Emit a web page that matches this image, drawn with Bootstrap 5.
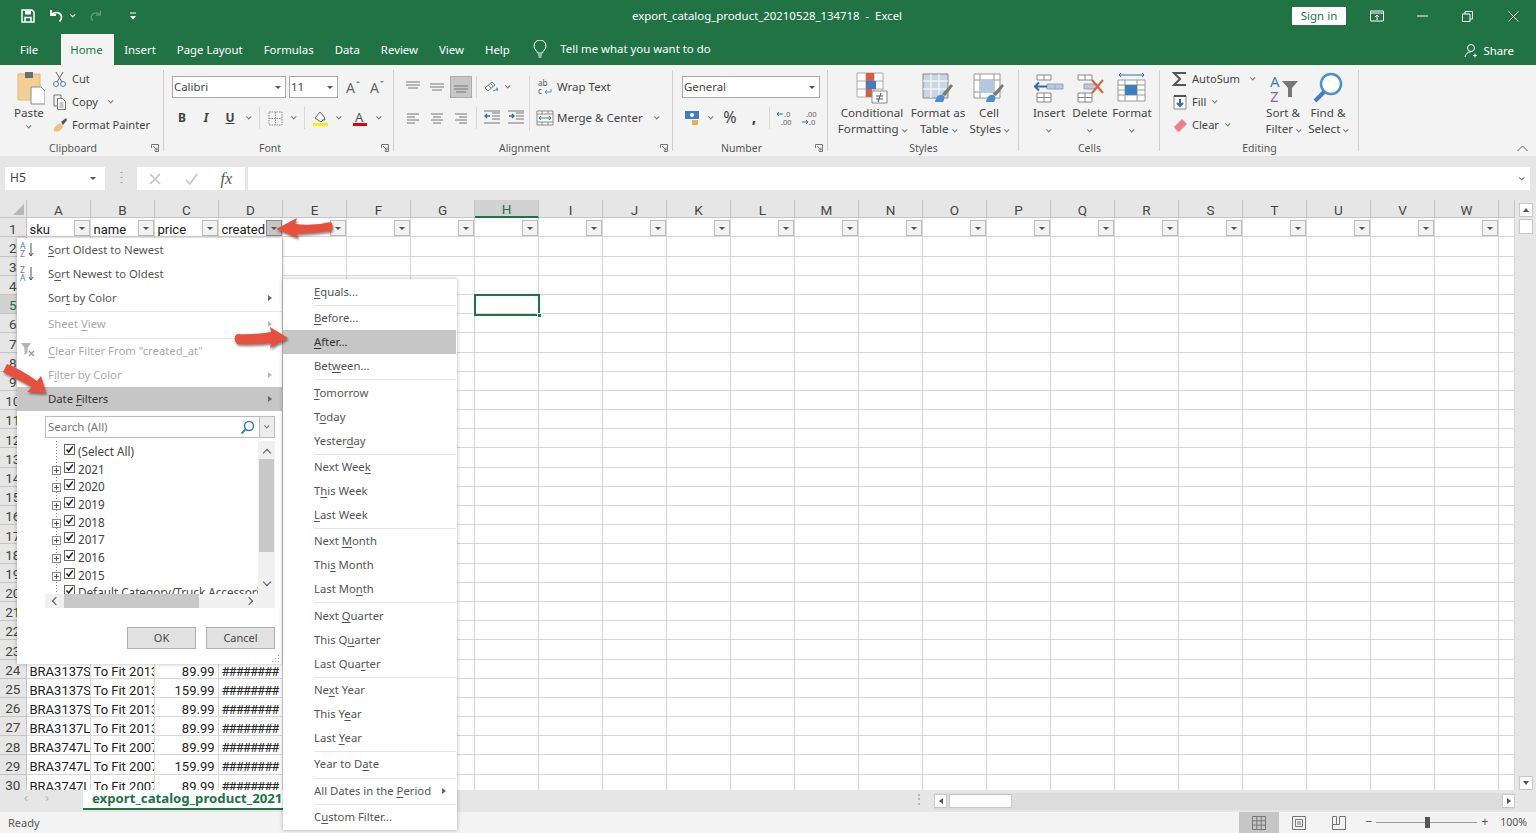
<!DOCTYPE html>
<html lang="en">
<head>
<meta charset="UTF-8">
<title>export_catalog_product_20210528_134718 - Excel</title>
<link href="https://cdn.jsdelivr.net/npm/bootstrap@5.3.0/dist/css/bootstrap.min.css" rel="stylesheet">
<style>
body{margin:0;background:#e6e6e6;overflow:hidden}
.xl-app{position:relative;width:1536px;height:833px;overflow:hidden;display:flex;flex-direction:column;font-family:"Noto Sans","Open Sans",sans-serif;font-size:11.5px;color:#444;line-height:1.2;background:#e6e6e6}
.xl-title{height:32px;background:#217346;color:#fff;flex:none}
.xl-qat{width:632px;padding-left:20px}
.xl-q-undo{margin-left:12px}
.xl-q-cv{margin-left:7px}
.xl-q-redo{margin-left:14px}
.xl-q-cust{margin-left:26px}
.xl-doc{font-size:11.4px;white-space:pre}
.xl-signin{width:54px;height:18px;background:#fff;color:#217346;font-size:11.5px;margin-right:8px}
.xl-winbtn{width:45.5px}
.xl-tabs{height:33px;background:#217346;color:#fff;flex:none;font-size:11.4px;padding-left:9px}
.xl-tab{padding:1px 10.5px 0;height:31px;margin-top:2px;display:flex;align-items:center;color:#fff;text-decoration:none}
.xl-tab-on{background:#f3f3f3;color:#217346;padding:1px 11px 0 9px}
.xl-tab-gap{padding:1px 11px 0;margin-right:12px}
.xl-tell{margin-left:13px;gap:13px}
.xl-share{margin-left:auto;margin-right:22px;gap:4px;padding-top:7px}
.xl-ribbon{height:91px;background:#f3f3f3;flex:none;position:relative}
.xl-group{position:relative;height:91px;flex:none}
.xl-group::after{content:"";position:absolute;right:0;top:5px;bottom:5px;width:1px;background:#d0d0d0}
.xl-grp-clip{width:164px}.xl-grp-font{width:230px;padding-left:6px}.xl-grp-align{width:279px;padding-left:7px}
.xl-grp-num{width:155px;padding-left:7px}.xl-grp-style{width:191px;padding-left:10px}.xl-grp-cell{width:141px;padding-left:10px}
.xl-grp-edit{width:199px;padding-left:11px}
.xl-glabel{position:absolute;left:0;right:0;top:77px;text-align:center;font-size:10.5px;color:#555}
.xl-has-launch .xl-glabel{right:18px}
.xl-launch{position:absolute;right:5px;top:79px}
.xl-chev{display:inline-block;width:3.5px;height:3.5px;border-right:1px solid #777;border-bottom:1px solid #777;transform:rotate(45deg) translate(-1px,-1px);flex:none}
.xl-big{display:flex;flex-direction:column;align-items:center;height:76px;white-space:nowrap;flex:none;line-height:16px;font-size:11.6px}
.xl-big svg{margin-top:6px;height:34px;flex:none}
.xl-big>div{gap:4px}
.xl-big .xl-chev{margin-top:4px}
.xl-b-paste{width:42px;margin-left:8px}
.xl-b-cf{width:68px}.xl-b-ft{width:64px}.xl-b-cs{width:38px}
.xl-b-ins{width:40px}.xl-b-del{width:42px}.xl-b-fmt{width:42px}
.xl-b-sort{width:44px}.xl-b-find{width:46px}
.xl-small-col{padding-top:2px;flex:none}
.xl-small{height:23px;display:flex;align-items:center;gap:3px;white-space:nowrap;font-size:11.1px}
.xl-ico{width:18px;height:18px;flex:none}
.xl-clip-col{width:114px;margin-left:1px}
.xl-edit-col{width:90px}
.xl-row-a{margin-top:11px;height:22px}
.xl-row-b{margin-top:9px;height:22px}
.xl-select{background:#fff;border:1px solid #ababab;height:22px;padding:0 1px;font-size:11.4px;justify-content:space-between;flex:none}
.xl-select .xl-tri{margin-right:3px}
.xl-tri{width:0;height:0;border-left:3px solid transparent;border-right:3px solid transparent;border-top:3px solid #555;flex:none;display:inline-block}
.xl-sel-font{width:114px;margin-left:2px}.xl-sel-size{width:49px;margin-left:3px}.xl-sel-fmt{width:138px;margin-left:2px}
.xl-mini{width:24px;height:22px;flex:none;font-size:12px}
.xl-mini-n{width:20px}
.xl-mini-on{position:relative}
.xl-mini-on::before{content:"";position:absolute;left:1px;right:1px;top:0;bottom:0;background:#c6c6c6;border:1px solid #ababab}
.xl-mini-on svg{position:relative}
.xl-cv{width:14px;flex:none}
.xl-vs{width:7px;height:22px;flex:none}
.xl-vs::after{content:"";display:block;width:1px;height:22px;margin-left:3px;background:#d8d8d8}
.xl-vs-a{width:8px}
.xl-ms{margin-left:2px}
.xl-align-l{width:129px;border-right:1px solid #d8d8d8;height:55px;margin-top:11px;flex:none}
.xl-align-l .xl-row-a{margin-top:0}
.xl-align-r{padding-left:6px;margin-top:11px;flex:none}
.xl-align-r .xl-a,.xl-align-r .xl-b{height:22px;display:flex;align-items:center;gap:3px;white-space:nowrap}
.xl-align-r .xl-b{margin-top:9px}
.xl-merge-cv{margin-left:9px}
.xl-collapse{position:absolute;right:8px;top:80px}
.xl-fbar{height:44px;flex:none;padding-top:11px;background:#e6e6e6}
.xl-namebox{width:100px;height:23px;margin-left:5px;background:#fff;padding:0 5px;font-size:12px;justify-content:space-between;flex:none}
.xl-namebox .xl-tri{margin-right:4px}
.xl-dots{width:32px;color:#999;text-align:center;flex:none;letter-spacing:0}
.xl-fxbox{width:108px;height:23px;background:#fff;flex:none;padding:0 13px 0 11px;justify-content:space-between}
.xl-fx{font-family:"Liberation Serif",serif;font-style:italic;font-size:16px;color:#555}
.xl-input{height:23px;flex:1;margin:0 6px 0 3px;background:#fff;padding-right:7px}
.xl-gridwrap{height:590px;flex:none}
.xl-sheet{width:1515px;height:590px;overflow:hidden;display:grid;grid-template-columns:26.5px repeat(23,64px) 1fr;grid-auto-rows:19.2px;grid-template-rows:18.2px;background:#fff;font-family:Roboto,"Liberation Sans",sans-serif;font-size:13px;color:#222;flex:none}
.xl-colh,.xl-rowh{background:#e6e6e6;border-right:1px solid #c4c4c4;border-bottom:1px solid #c4c4c4;display:flex;align-items:center;justify-content:center;color:#444;font-size:13.5px;line-height:1;padding-top:4px}
.xl-colh{padding-left:1px}
.xl-colh-on{background:#d2d2d2;border-bottom:2px solid #217346;color:#217346}
.xl-rowh-on{background:#d2d2d2;color:#217346}
.xl-corner{position:relative}
.xl-corner::after{content:"";position:absolute;right:2px;bottom:2px;border-left:11px solid transparent;border-bottom:11px solid #b7b7b7}
.xl-cell{border-right:1px solid #d8d8d8;border-bottom:1px solid #d8d8d8;padding:0 2px 0 3px;overflow:hidden;white-space:nowrap;position:relative;line-height:23px}
.xl-num{text-align:right;padding-right:3px}
.xl-hash{letter-spacing:-.9px}
.xl-cell-sel{overflow:visible;z-index:1}
.xl-cell-sel::before{content:"";position:absolute;left:-1px;top:-1px;right:-2px;bottom:-3px;border:2px solid #217346}
.xl-cell-sel::after{content:"";position:absolute;right:-4px;bottom:-5px;width:5px;height:5px;background:#217346;border:1px solid #fff}
.xl-ftr{position:absolute;right:0;top:2px;width:16px;height:16px;background:#f2f2f2;border:1px solid #bcbcbc;display:flex;align-items:center;justify-content:center}
.xl-ftr-on{background:#c6c6c6;border-color:#8a8a8a}
.xl-vscroll{width:21px;height:590px;padding:3px 3px 0 4px;flex:none}
.xl-sb-btn{width:14px;height:14px;background:#fff;border:1px solid #c8c8c8;flex:none}
.xl-sb-thumb{width:14px;height:15px;background:#fff;border:1px solid #c8c8c8;margin-top:2px}
.xl-sb-up{border-left:3px solid transparent;border-right:3px solid transparent;border-bottom:4px solid #555}
.xl-sb-dn{border-left:3px solid transparent;border-right:3px solid transparent;border-top:4px solid #555}
.xl-sb-rt{border-top:3px solid transparent;border-bottom:3px solid transparent;border-left:4px solid #555}
.xl-sb-lf{border-top:3px solid transparent;border-bottom:3px solid transparent;border-right:4px solid #555}
.xl-strip{height:22px;flex:none;background:#e6e6e6}
.xl-nav{width:83px;color:#b5b5b5;gap:17px;padding-left:24px;font-size:13px}
.xl-sheet-tab{width:240px;height:20px;background:#fff;border-bottom:2px solid #217346;color:#217346;font-weight:700;font-size:13.2px;padding-left:9px;white-space:nowrap;overflow:hidden;line-height:17px;font-family:"Noto Sans",sans-serif}
.xl-hdots{margin-left:auto;width:30px;color:#999;text-align:center;font-size:12px;margin-top:2px}
.xl-hs-btn{width:13px;height:14px;background:#fff;border:1px solid #c8c8c8;flex:none;margin-top:1px}
.xl-hs-track{width:581px;height:17px;background:#dcdcdc;margin:3px 21px 0 0;flex:none}
.xl-hs-thumb{width:63px;height:14px;background:#fff;border:1px solid #c8c8c8;margin:1px 0 0 2px}
.xl-status{height:21px;flex:none;background:#f3f3f3;font-size:11px;color:#555;padding-left:8px}
.xl-views{margin-left:auto;height:21px}
.xl-view{width:40px;height:21px}
.xl-view-on{background:#c6c6c6}
.xl-zoom{gap:0;margin-left:7px;color:#555;font-size:12px}
.xl-slider{width:101px;height:1px;background:#999;margin:0 4px;position:relative}
.xl-slider::after{content:"";position:absolute;left:49px;top:-5px;width:5px;height:11px;background:#555}
.xl-pct{margin:0 9px 0 12px;font-size:10.5px}
.xl-fmenu,.xl-dmenu{display:block;border:0;border-radius:0;padding:0;margin:0;min-width:0;box-shadow:0 0 4px rgba(0,0,0,.3);font-family:"Noto Sans",sans-serif;font-size:11.3px;color:#555;background:#fff;z-index:5}
.xl-fmenu{position:absolute;left:17px;top:238px;width:265px;height:426px}
.xl-dmenu{position:absolute;left:283px;top:279px;width:174px;height:551px;padding-top:.5px;z-index:6}
.xl-mitem{display:flex;align-items:center;justify-content:space-between;height:24px;padding:0 10px 0 31px;color:#555;background:none;white-space:nowrap;position:relative}
.xl-dmenu .xl-mitem{padding-left:31px;height:24px;margin-right:1px}
.xl-mitem.active,.xl-mitem:active{background:#c6c6c6;color:#333}
.xl-mitem u{text-underline-offset:2px}
.xl-mdis{color:#aaa}
.xl-mic{position:absolute;left:3px;top:3px}
.xl-rarr{border-top:3px solid transparent;border-bottom:3px solid transparent;border-left:4px solid #666}
.xl-mdis .xl-rarr{border-left-color:#bbb}
.xl-msep{height:2px;margin:0 0 0 31px;border:0;border-bottom:1px solid #e6e6e6;opacity:1;background:none}
.xl-msep-b{height:3px}
.xl-dsep{height:2.4px;margin:0 1px 0 31px;border:0;border-bottom:1px solid #e6e6e6;opacity:1;background:none}
.xl-search{margin:5px 7px 0 28px;height:22px;border:1px solid #bdbdbd;background:#fff;color:#777;font-size:11.5px;padding-left:2px;display:flex;align-items:center;justify-content:space-between}
.xl-search-drop{width:15px;height:20px;border-left:1px solid #bdbdbd;background:#ececec;display:flex;align-items:center;justify-content:center}
.xl-tree-wrap{margin:3px 7px 0 28px;height:167px;display:grid;grid-template-columns:213px 17px;grid-template-rows:153px 14px;background:#f0f0f0}
.xl-tree{background-color:#fff;overflow:hidden;padding-top:1px;color:#444;background-image:linear-gradient(#888 50%,transparent 50%);background-size:1px 3px;background-position:11px 9px;background-repeat:repeat-y}
.xl-trow{height:17.7px;display:flex;align-items:center;white-space:nowrap;padding-left:7px;font-size:11.7px}
.xl-plus{width:9px;height:9px;border:1px solid #8a8a9a;background:#fff;flex:none;margin-top:3px;margin-right:3px;position:relative}
.xl-plus::before{content:"";position:absolute;left:1px;right:1px;top:3px;height:1px;background:#556}
.xl-plus::after{content:"";position:absolute;top:1px;bottom:1px;left:3px;width:1px;background:#556}
.xl-plus-none{border:0;background:none}
.xl-plus-none::before,.xl-plus-none::after{display:none}
.xl-cbx{width:11px;height:11px;border:1px solid #666;background:#fff;flex:none;margin:-3px 3px 0 0;display:flex}
.xl-vs-tree{background:#f0f0f0;padding-top:5px}
.xl-vs-chev{width:6px;height:6px;border-left:1.5px solid #555;border-top:1.5px solid #555;transform:rotate(45deg);margin:0 auto}
.xl-vs-chev-d{transform:rotate(225deg);margin-top:27px}
.xl-vs-th{width:15px;height:93px;background:#c8c8c8;margin:3px auto 0}
.xl-hs-tree{background:#f0f0f0;padding:0 0 0 7px}
.xl-hs-th{width:135px;height:14px;background:#c8c8c8;margin:0 0 0 5px;flex:none}
.xl-hs-chev{width:6px;height:6px;border-left:1.5px solid #555;border-bottom:1.5px solid #555;transform:rotate(45deg);flex:none;margin-left:1px}
.xl-hs-chev-r{transform:rotate(225deg);margin-left:auto;margin-right:6px}
.xl-dlg{margin:19px 7px 0 0;gap:10px}
.btn.xl-dlg-btn{width:69px;height:22px;padding:0;border-radius:0;background:#e1e1e1;border:1px solid #b0b0b0;color:#444;font-size:11px;line-height:20px}
.xl-grip{position:absolute;right:2px;bottom:2px}
.xl-arrows{position:absolute;left:0;top:0;z-index:9;pointer-events:none;filter:drop-shadow(1px 2px 1px rgba(60,30,30,.55))}
.xl-hide{position:absolute;width:0;height:0}
</style>
</head>
<body>
<svg class="xl-hide">
  <symbol id="al-top" viewBox="0 0 18 18"><path d="M2 4h14M2 7h14M4 10h10" stroke="#777" fill="none"/></symbol>
  <symbol id="al-mid" viewBox="0 0 18 18"><path d="M2 6h14M2 9h14M4 12h10" stroke="#777" fill="none"/></symbol>
  <symbol id="al-bot" viewBox="0 0 18 18"><path d="M2 8h14M2 11h14M4 14h10" stroke="#777" fill="none"/></symbol>
  <symbol id="al-l" viewBox="0 0 18 18"><path d="M3 5h12M3 8h8M3 11h12M3 14h8" stroke="#777" fill="none"/></symbol>
  <symbol id="al-c" viewBox="0 0 18 18"><path d="M3 5h12M5 8h8M3 11h12M5 14h8" stroke="#777" fill="none"/></symbol>
  <symbol id="al-r" viewBox="0 0 18 18"><path d="M3 5h12M7 8h8M3 11h12M7 14h8" stroke="#777" fill="none"/></symbol>
  <symbol id="chk" viewBox="0 0 9 9"><path d="M1.5 4.5 3.7 7 7.8 1.5" stroke="#222" stroke-width="1.5" fill="none"/></symbol>
  <symbol id="brush" viewBox="0 0 20 22"><path d="M8 13 17 3l2 2-8 10z" fill="#7a7a7a"/><path d="M1 21c1-6 5-9 9-6 1 2 0 4-1 6z" fill="#4a8fd0"/></symbol>
</svg>

<div class="xl-app">

  <div class="xl-title d-flex align-items-center">
    <div class="xl-qat d-flex align-items-center">
      <svg width="16" height="16" viewBox="0 0 16 16"><path d="M2 2h10l2 2v10H2z" fill="none" stroke="#fff" stroke-width="1.5"/><path d="M5 2.500h6v4H5z" fill="#fff"/><path d="M5 14V9.500h6V14" fill="none" stroke="#fff" stroke-width="1.5"/></svg>
      <svg class="xl-q-undo" width="16" height="16" viewBox="0 0 16 16"><path d="M3 2v5h5" fill="none" stroke="#fff" stroke-width="1.8"/><path d="M3.500 6.500c3-3 9-2.500 10 2 .4 2-.5 3.500-2 5" fill="none" stroke="#fff" stroke-width="1.8"/></svg>
      <span class="xl-chev xl-q-cv border-white"></span>
      <svg class="xl-q-redo" width="14" height="14" viewBox="0 0 16 16"><path d="M13 2v5H8" fill="none" stroke="#5a9a79" stroke-width="1.6"/><path d="M12.500 6.500c-3-3-9-2.500-10 2-.4 2 .5 3.500 2 5" fill="none" stroke="#5a9a79" stroke-width="1.6"/></svg>
      <svg class="xl-q-cust" width="8" height="8" viewBox="0 0 8 8"><path d="M1 1h6" stroke="#fff"/><path d="M1 4h6L4 7.500z" fill="#fff"/></svg>
    </div>
    <div class="xl-doc">export_catalog_product_20210528_134718  -  Excel</div>
    <div class="ms-auto d-flex align-items-center">
      <div class="xl-signin d-flex align-items-center justify-content-center">Sign in</div>
      <div class="xl-winbtn d-flex justify-content-center"><svg width="14" height="12" viewBox="0 0 14 12"><path d="M.5 1h13v10H.5zM.5 3h13" fill="none" stroke="#fff"/><path d="M7 10V5M5 7l2-2 2 2" fill="none" stroke="#fff"/></svg></div>
      <div class="xl-winbtn d-flex justify-content-center"><svg width="11" height="2" viewBox="0 0 11 2"><path d="M0 1h11" stroke="#fff"/></svg></div>
      <div class="xl-winbtn d-flex justify-content-center"><svg width="11" height="11" viewBox="0 0 11 11"><path d="M.5 3h7.500v7.500H.5zM3 3V.5h7.500V8H8" fill="none" stroke="#fff"/></svg></div>
      <div class="xl-winbtn d-flex justify-content-center"><svg width="11" height="11" viewBox="0 0 11 11"><path d="M.5.500l10 10M10.500.500l-10 10" stroke="#fff"/></svg></div>
    </div>
  </div>

  <ul class="xl-tabs nav align-items-start">
    <li><a class="xl-tab xl-tab-gap" href="#">File</a></li>
    <li><a class="xl-tab xl-tab-on" href="#">Home</a></li>
    <li><a class="xl-tab" href="#">Insert</a></li>
    <li><a class="xl-tab" href="#">Page Layout</a></li>
    <li><a class="xl-tab" href="#">Formulas</a></li>
    <li><a class="xl-tab" href="#">Data</a></li>
    <li><a class="xl-tab" href="#">Review</a></li>
    <li><a class="xl-tab" href="#">View</a></li>
    <li><a class="xl-tab" href="#">Help</a></li>
    <li class="xl-tell d-flex align-items-center mt-1 pt-1">
      <svg width="14" height="18" viewBox="0 0 14 18"><path d="M4.500 13c0-2-3.500-3.500-3.500-7a6 6 0 0 1 12 0c0 3.500-3.500 5-3.500 7zM5 15h4M5.500 17h3" fill="none" stroke="#fff"/></svg>
      <span>Tell me what you want to do</span>
    </li>
    <li class="xl-share d-flex align-items-center mt-1">
      <svg width="15" height="15" viewBox="0 0 15 15"><circle cx="7" cy="5" r="3.500" fill="none" stroke="#fff"/><path d="M1 14c.5-3 2.500-5 5.500-5M11 10.500v4M9 12.500h4" fill="none" stroke="#fff"/></svg>
      <span>Share</span>
    </li>
  </ul>

  <div class="xl-ribbon d-flex">

    <div class="xl-group xl-grp-clip xl-has-launch d-flex">
      <div class="xl-big xl-b-paste">
        <svg width="32" height="34" viewBox="0 0 32 34"><path d="M5 3h22v26H5z" fill="#f3cf95" stroke="#e0b878"/><path d="M12 1h8v6h-8z" fill="#6d6d6d"/><path d="M18 16h10l4 4v13H18z" fill="#fff" stroke="#8a8a8a"/></svg>
        <span>Paste</span>
        <span class="xl-chev"></span>
      </div>
      <div class="xl-small-col xl-clip-col">
        <div class="xl-small"><svg class="xl-ico" viewBox="0 0 18 18"><circle cx="5" cy="14" r="2.500" fill="none" stroke="#5b7fa8"/><circle cx="12" cy="14" r="2.500" fill="none" stroke="#5b7fa8"/><path d="M6 12 12 2M11 12 5 2" stroke="#666" fill="none"/></svg>Cut</div>
        <div class="xl-small"><svg class="xl-ico" viewBox="0 0 18 18"><path d="M3 2h7v3M3 2v11h3" fill="none" stroke="#777"/><path d="M6.500 5.500h5l3 3v8h-8z" fill="#fff" stroke="#777"/><path d="M8.500 10h4M8.500 12h4M8.500 14h4" stroke="#888"/></svg>Copy<span class="xl-chev ms-2"></span></div>
        <div class="xl-small"><svg class="xl-ico" viewBox="0 0 18 18"><path d="M10 6 15 2l1 2-4 5z" fill="#555"/><path d="M3 15c-1-3 2-6 6-8l3 3c-1 4-5 7-9 5z" fill="#ecc184"/></svg>Format Painter</div>
      </div>
      <div class="xl-glabel">Clipboard</div>
      <svg class="xl-launch" width="8" height="8" viewBox="0 0 8 8"><path d="M.5 4V.5h7v7H4M2 2l4 4M6 3.500V6H3.500" fill="none" stroke="#777"/></svg>
    </div>

    <div class="xl-group xl-grp-font xl-has-launch">
      <div class="xl-row-a d-flex align-items-center">
        <div class="xl-select xl-sel-font d-flex align-items-center"><span>Calibri</span><span class="xl-tri"></span></div>
        <div class="xl-select xl-sel-size d-flex align-items-center"><span>11</span><span class="xl-tri"></span></div>
        <div class="xl-mini d-flex align-items-center justify-content-center ms-1"><svg width="18" height="18" viewBox="0 0 18 18"><text x="1" y="15" font-family="Noto Sans,sans-serif" font-size="14" fill="#666">A</text><path d="M11 5l2-2 2 2" fill="#4a8fd0"/></svg></div>
        <div class="xl-mini d-flex align-items-center justify-content-center"><svg width="18" height="18" viewBox="0 0 18 18"><text x="1" y="15" font-family="Noto Sans,sans-serif" font-size="14" fill="#666">A</text><path d="M11 3l2 2 2-2" fill="#4a8fd0"/></svg></div>
      </div>
      <div class="xl-row-b d-flex align-items-center">
        <div class="xl-mini d-flex align-items-center justify-content-center fw-bold">B</div>
        <div class="xl-mini d-flex align-items-center justify-content-center fst-italic fw-bold">I</div>
        <div class="xl-mini d-flex align-items-center justify-content-center fw-bold text-decoration-underline">U</div>
        <div class="xl-cv d-flex justify-content-center"><span class="xl-chev"></span></div>
        <div class="xl-vs"></div>
        <div class="xl-mini d-flex align-items-center justify-content-center"><svg width="15" height="15" viewBox="0 0 15 15"><path d="M1 1h13v13H1zM7.500 1v13M1 7.500h13" fill="none" stroke="#888" stroke-dasharray="1.500 1"/></svg></div>
        <div class="xl-cv d-flex justify-content-center"><span class="xl-chev"></span></div>
        <div class="xl-vs"></div>
        <div class="xl-mini d-flex align-items-center justify-content-center"><svg width="17" height="17" viewBox="0 0 17 17"><path d="M3 8 8 2l5 6-4 4z" fill="#fff" stroke="#666"/><path d="M10 9h4l-2 2z" fill="#4a8fd0"/><path d="M1 13h15v3H1z" fill="#ffee00"/></svg></div>
        <div class="xl-cv d-flex justify-content-center"><span class="xl-chev"></span></div>
        <div class="xl-mini d-flex align-items-center justify-content-center xl-ms"><svg width="18" height="18" viewBox="0 0 18 18"><text x="4" y="13" font-family="Noto Sans,sans-serif" font-size="13" fill="#555">A</text><path d="M2 14h14v3H2z" fill="#e3001b"/></svg></div>
        <div class="xl-cv d-flex justify-content-center"><span class="xl-chev"></span></div>
      </div>
      <div class="xl-glabel">Font</div>
      <svg class="xl-launch" width="8" height="8" viewBox="0 0 8 8"><path d="M.5 4V.5h7v7H4M2 2l4 4M6 3.500V6H3.500" fill="none" stroke="#777"/></svg>
    </div>

    <div class="xl-group xl-grp-align xl-has-launch d-flex">
      <div class="xl-align-l">
        <div class="xl-row-a d-flex align-items-center">
          <div class="xl-mini d-flex align-items-center justify-content-center"><svg width="18" height="18"><use href="#al-top"/></svg></div>
          <div class="xl-mini d-flex align-items-center justify-content-center"><svg width="18" height="18"><use href="#al-mid"/></svg></div>
          <div class="xl-mini xl-mini-on d-flex align-items-center justify-content-center"><svg width="18" height="18"><use href="#al-bot"/></svg></div>
          <div class="xl-vs xl-vs-a"></div>
          <div class="xl-mini xl-mini-n d-flex align-items-center justify-content-center"><svg width="17" height="15" viewBox="0 0 17 15"><path d="M2 8 9 2l3 3-7 6zM7 3l3 3M5 5l3 3" fill="none" stroke="#777"/><path d="M10 11l5-2M15 9l-2-1M15 9l-1 2" stroke="#4a8fd0" fill="none"/></svg></div>
          <div class="xl-cv d-flex justify-content-center"><span class="xl-chev"></span></div>
        </div>
        <div class="xl-row-b d-flex align-items-center">
          <div class="xl-mini d-flex align-items-center justify-content-center"><svg width="18" height="18"><use href="#al-l"/></svg></div>
          <div class="xl-mini d-flex align-items-center justify-content-center"><svg width="18" height="18"><use href="#al-c"/></svg></div>
          <div class="xl-mini d-flex align-items-center justify-content-center"><svg width="18" height="18"><use href="#al-r"/></svg></div>
          <div class="xl-vs"></div>
          <div class="xl-mini d-flex align-items-center justify-content-center"><svg width="18" height="16" viewBox="0 0 18 16"><path d="M9 3h8M9 6h8M9 9h8M1 13h16M1 1h16" stroke="#777" fill="none"/><path d="M7 6H2M4 4 2 6l2 2" stroke="#2a6fb5" stroke-width="1.3" fill="none"/></svg></div>
          <div class="xl-mini d-flex align-items-center justify-content-center"><svg width="18" height="16" viewBox="0 0 18 16"><path d="M9 3h8M9 6h8M9 9h8M1 13h16M1 1h16" stroke="#777" fill="none"/><path d="M2 6h5M5 4l2 2-2 2" stroke="#2a6fb5" stroke-width="1.3" fill="none"/></svg></div>
        </div>
      </div>
      <div class="xl-align-r">
        <div class="xl-a"><svg class="xl-ico" viewBox="0 0 18 18"><text x="2" y="8" font-family="Noto Sans,sans-serif" font-size="8" fill="#555">ab</text><text x="2" y="16" font-family="Noto Sans,sans-serif" font-size="8" fill="#555">c</text><path d="M15 11v3H9M11 12l-2 2 2 2" fill="none" stroke="#4a8fd0"/></svg>Wrap Text</div>
        <div class="xl-b"><svg class="xl-ico" viewBox="0 0 18 18"><path d="M1 2h16v14H1zM1 5h16M1 13h16M6 2v3M12 2v3M6 13v3M12 13v3" fill="#fff" stroke="#888"/><path d="M3 9h12M5 7 3 9l2 2M13 7l2 2-2 2" stroke="#2a6fb5" fill="none"/></svg>Merge &amp; Center<span class="xl-chev xl-merge-cv"></span></div>
      </div>
      <div class="xl-glabel">Alignment</div>
      <svg class="xl-launch" width="8" height="8" viewBox="0 0 8 8"><path d="M.5 4V.5h7v7H4M2 2l4 4M6 3.500V6H3.500" fill="none" stroke="#777"/></svg>
    </div>

    <div class="xl-group xl-grp-num xl-has-launch">
      <div class="xl-row-a d-flex align-items-center"><div class="xl-select xl-sel-fmt d-flex align-items-center"><span>General</span><span class="xl-tri"></span></div></div>
      <div class="xl-row-b d-flex align-items-center">
        <div class="xl-mini d-flex align-items-center justify-content-center"><svg width="17" height="16" viewBox="0 0 17 16"><path d="M1 1h14v8H1z" fill="#3f7fc0"/><circle cx="8" cy="5" r="2" fill="#fff"/><path d="M8 10h6v5H8z" fill="#eeb04f"/></svg></div>
        <div class="xl-cv d-flex justify-content-center"><span class="xl-chev"></span></div>
        <div class="xl-mini d-flex align-items-center justify-content-center ms-0 fs-6">%</div>
        <div class="xl-mini d-flex align-items-center justify-content-center fw-bold fs-6">,</div>
        <div class="xl-vs"></div>
        <div class="xl-mini d-flex align-items-center justify-content-center"><svg width="18" height="16" viewBox="0 0 18 16"><text x="8" y="7" font-family="Noto Sans,sans-serif" font-size="7.500" fill="#666">.0</text><text x="5" y="15" font-family="Noto Sans,sans-serif" font-size="7.500" fill="#666">.00</text><path d="M7 4H1M3 2 1 4l2 2" stroke="#2a6fb5" fill="none"/></svg></div>
        <div class="xl-mini d-flex align-items-center justify-content-center"><svg width="18" height="16" viewBox="0 0 18 16"><text x="6" y="7" font-family="Noto Sans,sans-serif" font-size="7.500" fill="#666">.00</text><text x="9" y="15" font-family="Noto Sans,sans-serif" font-size="7.500" fill="#666">.0</text><path d="M2 12h6M6 10l2 2-2 2" stroke="#2a6fb5" fill="none"/></svg></div>
      </div>
      <div class="xl-glabel">Number</div>
      <svg class="xl-launch" width="8" height="8" viewBox="0 0 8 8"><path d="M.5 4V.5h7v7H4M2 2l4 4M6 3.500V6H3.500" fill="none" stroke="#777"/></svg>
    </div>

    <div class="xl-group xl-grp-style d-flex">
      <div class="xl-big xl-b-cf">
        <svg width="32" height="32" viewBox="0 0 32 32"><path d="M1 1h26v24H1zM1 9h26M1 17h26M10 1v24M18 1v24" fill="#fff" stroke="#aaa"/><path d="M10 1h8v8h-8z" fill="#d9603b"/><path d="M10 9h10v8H10z" fill="#3f7fc0"/><path d="M10 17h6v8h-6z" fill="#d9603b"/><path d="M16 19h15v12H16z" fill="#fff" stroke="#888"/><path d="M20 24h7M20 27h7M25 21l-3 9" stroke="#555" fill="none"/></svg>
        <span>Conditional</span>
        <div class="d-flex align-items-center">Formatting<span class="xl-chev"></span></div>
      </div>
      <div class="xl-big xl-b-ft">
        <svg width="32" height="32" viewBox="0 0 32 32"><path d="M1 2h25v24H1z" fill="#c9d5e5" stroke="#888"/><path d="M1 9h25M1 17h25M9 2v24M17 2v24" stroke="#fff"/><use href="#brush" x="12" y="9" width="20" height="22"/></svg>
        <span>Format as</span>
        <div class="d-flex align-items-center">Table<span class="xl-chev"></span></div>
      </div>
      <div class="xl-big xl-b-cs">
        <svg width="32" height="32" viewBox="0 0 32 32"><path d="M1 2h26v24H1zM1 8h26M1 20h26M7 2v24M21 2v24" fill="#fff" stroke="#999"/><path d="M7 8h14v12H7z" fill="#b4c6e0"/><use href="#brush" x="12" y="9" width="20" height="22"/></svg>
        <span>Cell</span>
        <div class="d-flex align-items-center">Styles<span class="xl-chev"></span></div>
      </div>
      <div class="xl-glabel">Styles</div>
    </div>

    <div class="xl-group xl-grp-cell d-flex">
      <div class="xl-big xl-b-ins">
        <svg width="30" height="30" viewBox="0 0 30 30"><path d="M3 2h14v5H3zM10 2v5M3 20h14v9H3zM3 24.500h14M10 20v9" fill="#fff" stroke="#888"/><path d="M13 11h16v5H13zM21 11v5" fill="#b9c8dc" stroke="#8fa5c0"/><path d="M13 13.500H1M5 9.500 1 13.500l4 4" stroke="#2a6fb5" stroke-width="2" fill="none"/></svg>
        <span>Insert</span>
        <span class="xl-chev mt-2"></span>
      </div>
      <div class="xl-big xl-b-del">
        <svg width="30" height="30" viewBox="0 0 30 30"><path d="M3 2h14v5H3zM10 2v5M3 20h14v9H3zM3 24.500h14M10 20v9" fill="#fff" stroke="#888"/><path d="M9 11h13v5H9z" fill="#b9c8dc" stroke="#8fa5c0"/><path d="M17 7l11 13M28 7 17 20" stroke="#d9603b" stroke-width="2"/></svg>
        <span>Delete</span>
        <span class="xl-chev mt-2"></span>
      </div>
      <div class="xl-big xl-b-fmt">
        <svg width="30" height="30" viewBox="0 0 30 30"><path d="M1 7h27v21H1zM1 12h27M1 17h27M1 22h27M8 7v21M20 7v21" fill="#fff" stroke="#999"/><path d="M8 12h12v10H8z" fill="#3f7fc0"/><path d="M2 2h25M4 0 2 2l2 2M25 0l2 2-2 2" stroke="#2a6fb5" fill="none"/></svg>
        <span>Format</span>
        <span class="xl-chev mt-2"></span>
      </div>
      <div class="xl-glabel">Cells</div>
    </div>

    <div class="xl-group xl-grp-edit d-flex">
      <div class="xl-small-col xl-edit-col">
        <div class="xl-small"><svg class="xl-ico" viewBox="0 0 18 18"><path d="M15 3H3l6 6-6 6h12" fill="none" stroke="#555" stroke-width="2"/></svg>AutoSum<span class="xl-chev ms-2"></span></div>
        <div class="xl-small"><svg class="xl-ico" viewBox="0 0 18 18"><path d="M3 3h12v13H3z" fill="#fff" stroke="#888"/><path d="M3 3h12" stroke="#555" stroke-width="2"/><path d="M9 6v7M6 10l3 3 3-3" stroke="#2a6fb5" stroke-width="2" fill="none"/></svg>Fill<span class="xl-chev ms-1"></span></div>
        <div class="xl-small"><svg class="xl-ico" viewBox="0 0 18 18"><path d="M3 11 11 3l5 5-8 8H6z" fill="#ee7f8d"/><path d="M3 11l5 5H6z" fill="#f9c8ce"/></svg>Clear<span class="xl-chev ms-1"></span></div>
      </div>
      <div class="xl-big xl-b-sort">
        <svg width="32" height="32" viewBox="0 0 32 32"><text x="3" y="15" font-family="Noto Sans,sans-serif" font-size="15" fill="#3f7fc0">A</text><text x="3" y="30" font-family="Noto Sans,sans-serif" font-size="15" fill="#8a6bb5">Z</text><path d="M15 9h16l-6 7v9h-4v-9z" fill="#777"/></svg>
        <span>Sort &amp;</span>
        <div class="d-flex align-items-center">Filter<span class="xl-chev"></span></div>
      </div>
      <div class="xl-big xl-b-find">
        <svg width="32" height="32" viewBox="0 0 32 32"><circle cx="19" cy="12" r="10" fill="#fff" stroke="#4a8fd0" stroke-width="2.500"/><path d="M12 20 3 29" stroke="#3f7fc0" stroke-width="4"/></svg>
        <span>Find &amp;</span>
        <div class="d-flex align-items-center">Select<span class="xl-chev"></span></div>
      </div>
      <div class="xl-glabel">Editing</div>
    </div>

    <svg class="xl-collapse" width="11" height="7" viewBox="0 0 11 7"><path d="M.5 6l5-5 5 5" fill="none" stroke="#666"/></svg>
  </div>

  <div class="xl-fbar d-flex align-items-start">
    <div class="xl-namebox d-flex align-items-center"><span>H5</span><span class="xl-tri"></span></div>
    <div class="xl-dots d-flex flex-column align-items-center pt-1"><svg width="3" height="13" viewBox="0 0 3 13"><path d="M1.500 1v1M1.500 6v1M1.500 11v1" stroke="#999" stroke-width="2"/></svg></div>
    <div class="xl-fxbox d-flex align-items-center">
      <svg width="14" height="14" viewBox="0 0 14 14"><path d="M2 2l10 10M12 2 2 12" stroke="#c4c4c4" stroke-width="1.600"/></svg>
      <svg width="15" height="14" viewBox="0 0 15 14"><path d="M2 8l4 4 7-10" fill="none" stroke="#c4c4c4" stroke-width="1.600"/></svg>
      <span class="xl-fx">fx</span>
    </div>
    <div class="xl-input d-flex align-items-center justify-content-end"><span class="xl-chev"></span></div>
  </div>

  <div class="xl-gridwrap d-flex">
    <div class="xl-sheet" id="sheet"></div>
    <div class="xl-vscroll d-flex flex-column">
      <div class="xl-sb-btn d-flex align-items-center justify-content-center"><span class="xl-sb-up"></span></div>
      <div class="xl-sb-thumb"></div>
      <div class="xl-sb-btn d-flex align-items-center justify-content-center mt-auto"><span class="xl-sb-dn"></span></div>
    </div>
  </div>

  <div class="xl-strip d-flex align-items-start">
    <div class="xl-nav d-flex">
      <span>&lsaquo;</span><span>&rsaquo;</span>
    </div>
    <div class="xl-sheet-tab">export_catalog_product_2021</div>
    <div class="xl-hdots">&#8942;</div>
    <div class="xl-hs-track d-flex align-items-start">
      <div class="xl-hs-btn d-flex align-items-center justify-content-center"><span class="xl-sb-lf"></span></div>
      <div class="xl-hs-thumb"></div>
      <div class="xl-hs-btn d-flex align-items-center justify-content-center ms-auto"><span class="xl-sb-rt"></span></div>
    </div>
  </div>

  <div class="xl-status d-flex align-items-center">
    <span>Ready</span>
    <div class="xl-views d-flex">
      <div class="xl-view xl-view-on d-flex align-items-center justify-content-center"><svg width="14" height="14" viewBox="0 0 14 14"><path d="M.5.500h13v13H.5zM4.800.5v13M9.200.5v13M.5 4.800h13M.5 9.200h13" fill="none" stroke="#777"/></svg></div>
      <div class="xl-view d-flex align-items-center justify-content-center"><svg width="14" height="14" viewBox="0 0 14 14"><path d="M.5.500h13v13H.5z" fill="none" stroke="#777"/><path d="M3.500 3.500h7v7h-7zM5 6h4M5 8h4" fill="none" stroke="#777"/></svg></div>
      <div class="xl-view d-flex align-items-center justify-content-center"><svg width="14" height="14" viewBox="0 0 14 14"><path d="M.5 8.500V13.500h13V.5H7.500v8zM.5 8.500V.5h4v8" fill="none" stroke="#777"/></svg></div>
    </div>
    <div class="xl-zoom d-flex align-items-center">
      <span>&minus;</span>
      <div class="xl-slider"></div>
      <span>+</span>
      <span class="xl-pct">100%</span>
    </div>
  </div>

  <div class="xl-fmenu dropdown-menu show">
    <div class="xl-mitem"><svg class="xl-mic" width="16" height="18" viewBox="0 0 16 18"><text x="0" y="8" font-family="Noto Sans,sans-serif" font-size="8.500" fill="#3f7fc0">A</text><text x="0" y="16" font-family="Noto Sans,sans-serif" font-size="8.500" fill="#8a6bb5">Z</text><path d="M11 2v13M9 12l2 3 2-3" fill="none" stroke="#555"/></svg><span><u>S</u>ort Oldest to Newest</span></div>
    <div class="xl-mitem"><svg class="xl-mic" width="16" height="18" viewBox="0 0 16 18"><text x="0" y="8" font-family="Noto Sans,sans-serif" font-size="8.500" fill="#8a6bb5">Z</text><text x="0" y="16" font-family="Noto Sans,sans-serif" font-size="8.500" fill="#3f7fc0">A</text><path d="M11 2v13M9 12l2 3 2-3" fill="none" stroke="#555"/></svg><span>S<u>o</u>rt Newest to Oldest</span></div>
    <div class="xl-mitem"><span>Sor<u>t</u> by Color</span><span class="xl-rarr"></span></div>
    <hr class="xl-msep">
    <div class="xl-mitem xl-mdis"><span>Sheet <u>V</u>iew</span><span class="xl-rarr"></span></div>
    <hr class="xl-msep xl-msep-b">
    <div class="xl-mitem xl-mdis"><svg class="xl-mic" width="16" height="18" viewBox="0 0 16 18"><path d="M1 1h10L7.500 6v5l-3 2V6z" fill="#b5b5b5"/><path d="M9 9l5 5M14 9l-5 5" stroke="#9a9a9a" stroke-width="1.300"/></svg><span><u>C</u>lear Filter From "created_at"</span></div>
    <div class="xl-mitem xl-mdis"><span>F<u>i</u>lter by Color</span><span class="xl-rarr"></span></div>
    <div class="xl-mitem active"><span>Date <u>F</u>ilters</span><span class="xl-rarr"></span></div>
    <div class="xl-search"><span>Search (All)</span><span class="d-flex align-items-center gap-1"><svg width="15" height="15" viewBox="0 0 15 15"><circle cx="9" cy="6" r="4.500" fill="#fff" stroke="#3f7fc0" stroke-width="1.500"/><path d="M5.500 9.500 1.500 13.500" stroke="#3f7fc0" stroke-width="2"/></svg><span class="xl-search-drop"><span class="xl-chev"></span></span></span></div>
    <div class="xl-tree-wrap">
      <div class="xl-tree">
        <div class="xl-trow"><span class="xl-plus xl-plus-none"></span><span class="xl-cbx"><svg width="9" height="9"><use href="#chk"/></svg></span>(Select All)</div>
        <div class="xl-trow"><span class="xl-plus"></span><span class="xl-cbx"><svg width="9" height="9"><use href="#chk"/></svg></span>2021</div>
        <div class="xl-trow"><span class="xl-plus"></span><span class="xl-cbx"><svg width="9" height="9"><use href="#chk"/></svg></span>2020</div>
        <div class="xl-trow"><span class="xl-plus"></span><span class="xl-cbx"><svg width="9" height="9"><use href="#chk"/></svg></span>2019</div>
        <div class="xl-trow"><span class="xl-plus"></span><span class="xl-cbx"><svg width="9" height="9"><use href="#chk"/></svg></span>2018</div>
        <div class="xl-trow"><span class="xl-plus"></span><span class="xl-cbx"><svg width="9" height="9"><use href="#chk"/></svg></span>2017</div>
        <div class="xl-trow"><span class="xl-plus"></span><span class="xl-cbx"><svg width="9" height="9"><use href="#chk"/></svg></span>2016</div>
        <div class="xl-trow"><span class="xl-plus"></span><span class="xl-cbx"><svg width="9" height="9"><use href="#chk"/></svg></span>2015</div>
        <div class="xl-trow"><span class="xl-plus xl-plus-none"></span><span class="xl-cbx"><svg width="9" height="9"><use href="#chk"/></svg></span>Default Category/Truck Accessories</div>
      </div>
      <div class="xl-vs-tree">
        <div class="xl-vs-chev mt-1"></div>
        <div class="xl-vs-th"></div>
        <div class="xl-vs-chev xl-vs-chev-d"></div>
      </div>
      <div class="xl-hs-tree d-flex align-items-center">
        <span class="xl-hs-chev"></span>
        <span class="xl-hs-th"></span>
        <span class="xl-hs-chev xl-hs-chev-r"></span>
      </div>
      <div></div>
    </div>
    <div class="xl-dlg d-flex justify-content-end">
      <button class="btn xl-dlg-btn">OK</button>
      <button class="btn xl-dlg-btn">Cancel</button>
    </div>
    <svg class="xl-grip" width="8" height="8" viewBox="0 0 8 8"><path d="M6 1h1v1H6zM3 4h1v1H3zM6 4h1v1H6zM0 7h1v1H0zM3 7h1v1H3zM6 7h1v1H6z" fill="#999"/></svg>
  </div>

  <div class="xl-dmenu dropdown-menu show">
    <div class="xl-mitem"><span><u>E</u>quals...</span></div>
    <hr class="xl-dsep">
    <div class="xl-mitem"><span><u>B</u>efore...</span></div>
    <div class="xl-mitem active"><span><u>A</u>fter...</span></div>
    <div class="xl-mitem"><span>Bet<u>w</u>een...</span></div>
    <hr class="xl-dsep">
    <div class="xl-mitem"><span><u>T</u>omorrow</span></div>
    <div class="xl-mitem"><span>T<u>o</u>day</span></div>
    <div class="xl-mitem"><span>Yester<u>d</u>ay</span></div>
    <hr class="xl-dsep">
    <div class="xl-mitem"><span>Next Wee<u>k</u></span></div>
    <div class="xl-mitem"><span>T<u>h</u>is Week</span></div>
    <div class="xl-mitem"><span><u>L</u>ast Week</span></div>
    <hr class="xl-dsep">
    <div class="xl-mitem"><span>Next <u>M</u>onth</span></div>
    <div class="xl-mitem"><span>Thi<u>s</u> Month</span></div>
    <div class="xl-mitem"><span>Last Mo<u>n</u>th</span></div>
    <hr class="xl-dsep">
    <div class="xl-mitem"><span>Next <u>Q</u>uarter</span></div>
    <div class="xl-mitem"><span>This Q<u>u</u>arter</span></div>
    <div class="xl-mitem"><span>Last Qua<u>r</u>ter</span></div>
    <hr class="xl-dsep">
    <div class="xl-mitem"><span>Ne<u>x</u>t Year</span></div>
    <div class="xl-mitem"><span>This Y<u>e</u>ar</span></div>
    <div class="xl-mitem"><span>Last <u>Y</u>ear</span></div>
    <hr class="xl-dsep">
    <div class="xl-mitem"><span>Year to D<u>a</u>te</span></div>
    <hr class="xl-dsep">
    <div class="xl-mitem"><span>All Dates in the <u>P</u>eriod</span><span class="xl-rarr"></span></div>
    <hr class="xl-dsep">
    <div class="xl-mitem"><span>C<u>u</u>stom Filter...</span></div>
  </div>

  <svg class="xl-arrows" width="340" height="400" viewBox="0 0 340 400">
    <path d="M276 229 297 218 295 224Q315 226 331 222 334 226 331 231 315 233 297 234L298 238Z" fill="#e8503e"/>
    <path d="M288 338 270 327 271 332Q252 335 237 334 232 338 237 344 252 345 271 343L270 348Z" fill="#e8503e"/>
    <path d="M46 393 27 392 32 387Q18 379 3 372L7 364Q22 370 37 381L41 376Z" fill="#e8503e"/>
  </svg>
</div>

<script>
    // the sheet is 23 equal columns and 30 rows, only some of them hold data
    const letters = "ABCDEFGHIJKLMNOPQRSTUVW".split("");
    const head = ["sku", "name", "price", "created"];
    const data = {
        24: ["BRA3137S", "To Fit 2013", "89.99"],
        25: ["BRA3137S(", "To Fit 2013", "159.99"],
        26: ["BRA3137S-", "To Fit 2013", "89.99"],
        27: ["BRA3137L-", "To Fit 2013", "89.99"],
        28: ["BRA3747L", "To Fit 2007", "89.99"],
        29: ["BRA3747L(", "To Fit 2007", "159.99"],
        30: ["BRA3747L-", "To Fit 2007", "89.99"]
    };
    let html = '<div class="xl-colh xl-corner"></div>';
    letters.forEach(function (l) {
        html += `<div class="xl-colh${l === "H" ? " xl-colh-on" : ""}">${l}</div>`;
    });
    html += '<div class="xl-colh"></div>';
    for (let r = 1; r <= 31; r++) {
        html += `<div class="xl-rowh${r === 5 ? " xl-rowh-on" : ""}">${r}</div>`;
        for (let c = 0; c < 24; c++) {
            let cls = "xl-cell", inner = "";
            if (r === 1) {
                inner = head[c] || "";
                if (c < 23) inner += `<span class="xl-ftr${c === 3 ? " xl-ftr-on" : ""}"><span class="xl-tri"></span></span>`;
            } else if (data[r] && c < 3) {
                inner = data[r][c];
                if (c === 2) cls += " xl-num";
            } else if (data[r] && c === 3) {
                inner = "########";
                cls += " xl-hash";
            }
            if (r === 5 && c === 7) cls += " xl-cell-sel";
            html += `<div class="${cls}">${inner}</div>`;
        }
    }
    document.getElementById("sheet").innerHTML = html;
</script>
<script src="https://cdn.jsdelivr.net/npm/bootstrap@5.3.0/dist/js/bootstrap.bundle.min.js"></script>
</body>
</html>
